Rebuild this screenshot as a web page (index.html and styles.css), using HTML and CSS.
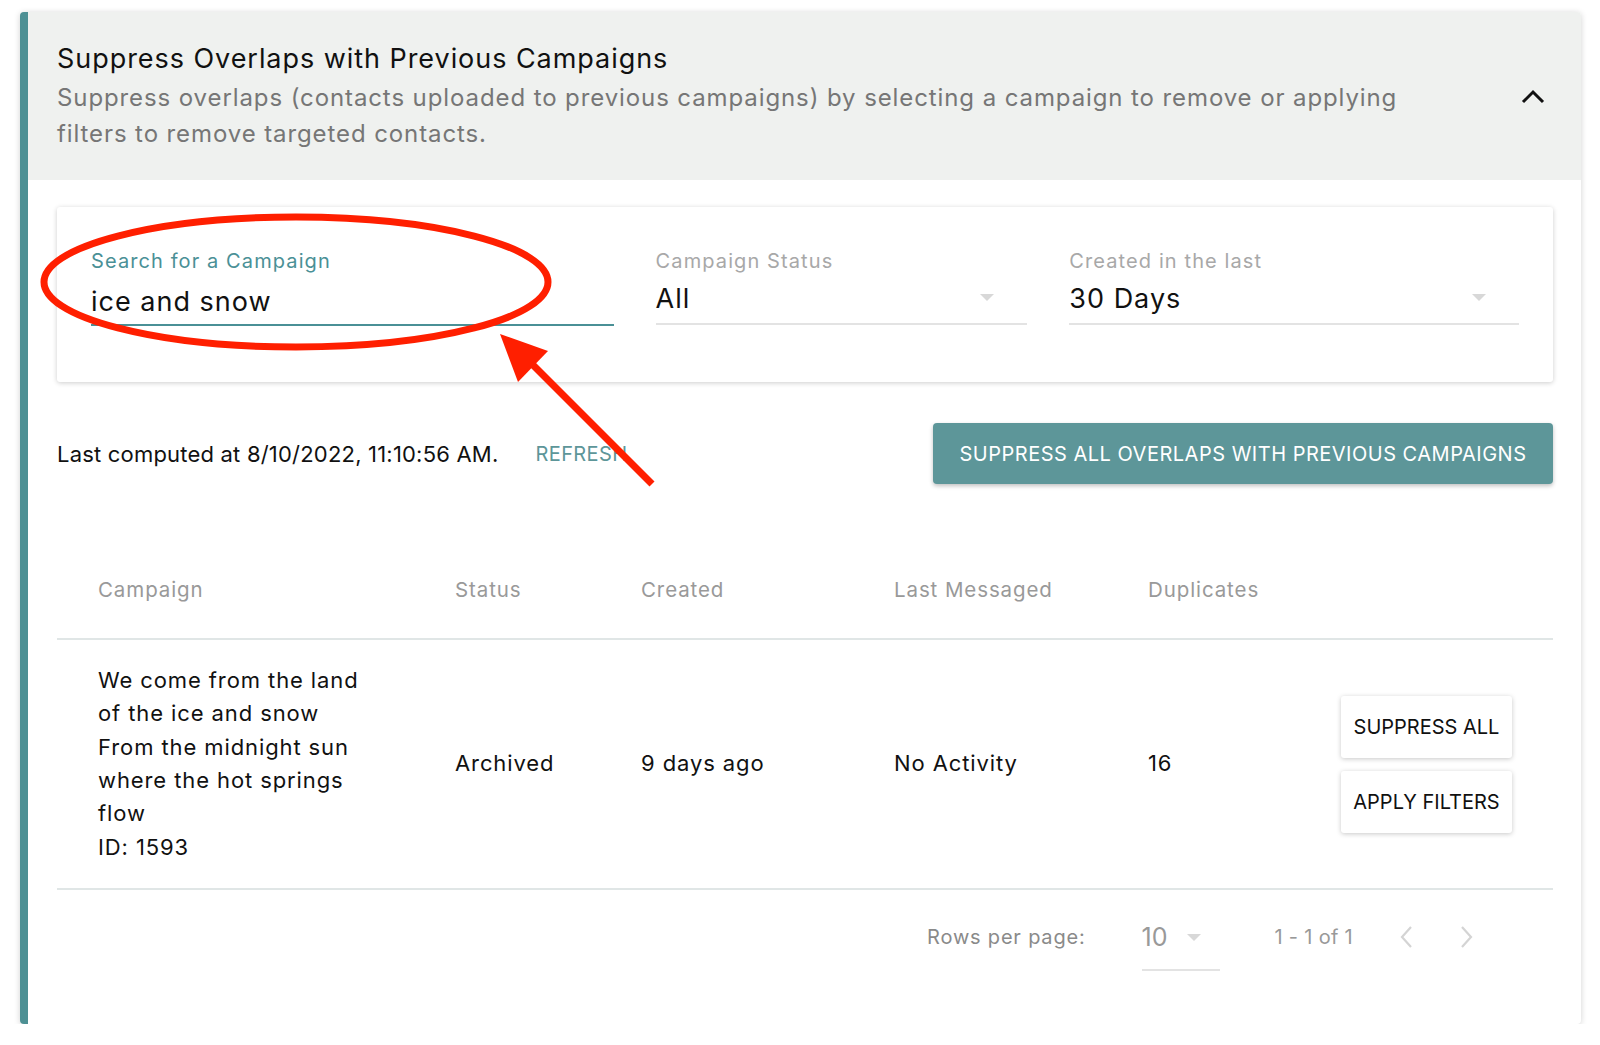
FILE: index.html
```html
<!DOCTYPE html>
<html lang="en">
<head>
    <meta charset="UTF-8">
    <meta name="viewport" content="width=device-width, initial-scale=1.0">
    <title>Suppress Overlaps</title>
    <link rel="stylesheet" href="styles.css">
</head>
<body>
    <div class="panel">
        <div class="panel-head">
            <div class="head-text">
                <h2>Suppress Overlaps with Previous Campaigns</h2>
                <p>Suppress overlaps (contacts uploaded to previous campaigns) by selecting a campaign to remove or applying filters to remove targeted contacts.</p>
            </div>
            <svg class="chevron" width="24" height="24" viewBox="0 0 24 24"><path d="M2 17 12 7l10 10" fill="none" stroke="#111" stroke-width="3"/></svg>
        </div>

        <div class="panel-body">
            <div class="filters">
                <div class="field field-search">
                    <label>Search for a Campaign</label>
                    <div class="value">ice and snow</div>
                </div>
                <div class="field field-status">
                    <label>Campaign Status</label>
                    <div class="value">All<span class="caret"></span></div>
                </div>
                <div class="field field-created">
                    <label>Created in the last</label>
                    <div class="value">30 Days<span class="caret"></span></div>
                </div>
            </div>

            <div class="toolbar">
                <span class="computed">Last computed at 8/10/2022, 11:10:56 AM.</span>
                <span class="refresh">Refresh</span>
                <button class="btn-primary">Suppress all overlaps with previous campaigns</button>
            </div>

            <div class="grid head-row">
                <div class="col-campaign">Campaign</div>
                <div>Status</div>
                <div>Created</div>
                <div>Last Messaged</div>
                <div>Duplicates</div>
                <div></div>
            </div>
            <div class="grid body-row">
                <div class="col-campaign">We come from the land<br>of the ice and snow<br>From the midnight sun<br>where the hot springs<br>flow<br>ID: 1593</div>
                <div>Archived</div>
                <div>9 days ago</div>
                <div>No Activity</div>
                <div>16</div>
                <div class="actions">
                    <button class="btn-plain">Suppress all</button>
                    <button class="btn-plain">Apply filters</button>
                </div>
            </div>

            <div class="pager">
                <span class="rows-label">Rows per page:</span>
                <div class="rows-select">10<span class="caret"></span></div>
                <span class="range">1 - 1 of 1</span>
                <svg class="page-arrow" width="16" height="24" viewBox="0 0 16 24"><path d="M13 2 4 12l9 10" fill="none" stroke="#d4d4d4" stroke-width="2.2"/></svg>
                <svg class="page-arrow" width="16" height="24" viewBox="0 0 16 24"><path d="M3 2l9 10-9 10" fill="none" stroke="#d4d4d4" stroke-width="2.2"/></svg>
            </div>
        </div>
    </div>

    <!-- red annotation drawn over the screenshot -->
    <svg class="markup" width="1600" height="1045" viewBox="0 0 1600 1045">
        <ellipse cx="296" cy="282" rx="252" ry="65" fill="none" stroke="#ff1f00" stroke-width="7"/>
        <line x1="652" y1="484" x2="530" y2="362" stroke="#ff1f00" stroke-width="7"/>
        <polygon points="500,334 548,351 518,382" fill="#ff1f00"/>
    </svg>
</body>
</html>
```

FILE: styles.css
```css
body {
    margin: 0;
    font-family: Inter, "Open Sans", sans-serif;
    background: #fff;
    color: #111;
}
.panel {
    margin: 12px 19px 0 20px;
    border-left: 8px solid #4d9094;
    border-radius: 4px;
    background: #fff;
    box-shadow: 0 1px 6px rgba(0, 0, 0, 0.18);
}
.panel-head {
    background: #eff1ef;
    display: flex;
    align-items: center;
    padding: 29px 36px 28px 29px;
    border-top-right-radius: 4px;
}
.head-text {
    flex: 1;
}
.panel-head h2 {
    margin: 0;
    font-size: 27px;
    font-weight: 400;
    line-height: 36px;
    letter-spacing: 0.95px;
}
.panel-head p {
    margin: 3px 0 0;
    max-width: 1370px;
    font-size: 24px;
    line-height: 36px;
    letter-spacing: 0.9px;
    color: #767676;
}
.chevron {
    width: 24px;
    height: 24px;
}
.panel-body {
    padding: 27px 28px 0 29px;
}
.filters {
    display: flex;
    gap: 42px;
    height: 175px;
    box-sizing: border-box;
    padding: 41px 34px 0;
    background: #fff;
    border-radius: 3px;
    box-shadow: 0 1px 5px rgba(0, 0, 0, 0.2);
}
.field label {
    display: block;
    font-size: 20px;
    line-height: 26px;
    letter-spacing: 1.1px;
    color: #a8a8a8;
}
.field .value {
    position: relative;
    font-size: 27px;
    line-height: 36px;
    letter-spacing: 1px;
    padding: 7px 0 6px;
    border-bottom: 2px solid #e3e3e3;
}
.field-search { width: 523px; }
.field-search label { color: #4a9096; }
.field-search .value {
    padding-top: 10px;
    padding-bottom: 4px;
    border-bottom-color: #4a9096;
}
.field-status { width: 372px; }
.field-created { width: 450px; }
.caret {
    position: absolute;
    right: 33px;
    top: 20px;
    border-left: 7px solid transparent;
    border-right: 7px solid transparent;
    border-top: 7px solid #d8d8d8;
}
.toolbar {
    display: flex;
    align-items: center;
    margin-top: 41px;
}
.computed {
    font-size: 22px;
    letter-spacing: 0.2px;
}
.refresh {
    margin-left: 37px;
    font-size: 20px;
    letter-spacing: 0.4px;
    color: #5d9699;
    text-transform: uppercase;
}
.btn-primary {
    margin-left: auto;
    width: 620px;
    height: 61px;
    border: none;
    border-radius: 4px;
    background: #5d9699;
    color: #fff;
    font-family: inherit;
    font-size: 20px;
    letter-spacing: 0.5px;
    text-transform: uppercase;
    box-shadow: 0 2px 4px rgba(0, 0, 0, 0.25);
}
.grid {
    display: grid;
    grid-template-columns: 398px 186px 253px 254px 193px 1fr;
    align-items: center;
}
.col-campaign {
    padding-left: 41px;
}
.head-row {
    margin-top: 56px;
    height: 100px;
    border-bottom: 2px solid #e0e6e6;
    color: #999;
    font-size: 20.5px;
    letter-spacing: 0.9px;
    box-sizing: border-box;
}
.body-row {
    height: 250px;
    border-bottom: 2px solid #e0e6e6;
    font-size: 22px;
    line-height: 33.4px;
    letter-spacing: 0.9px;
    box-sizing: border-box;
}
.actions {
    display: flex;
    flex-direction: column;
    gap: 13px;
}
.btn-plain {
    width: 171px;
    height: 62px;
    border: none;
    border-radius: 3px;
    background: #fff;
    font-family: inherit;
    font-size: 20px;
    color: #111;
    text-transform: uppercase;
    box-shadow: 0 1px 5px rgba(0, 0, 0, 0.22);
}
.pager {
    display: flex;
    align-items: flex-start;
    justify-content: flex-end;
    height: 134px;
    box-sizing: border-box;
    padding: 30px 78px 0 0;
    color: #8a8a8a;
    line-height: 34px;
}
.rows-label {
    font-size: 20px;
    letter-spacing: 0.8px;
}
.rows-select {
    position: relative;
    width: 78px;
    margin-left: 56px;
    padding-bottom: 15px;
    font-size: 25px;
    color: #999;
    border-bottom: 2px solid #e3e3e3;
}
.rows-select .caret {
    right: 19px;
    top: 14px;
}
.range {
    margin-left: 55px;
    font-size: 20px;
    letter-spacing: 0.3px;
    color: #999;
}
.page-arrow {
    margin: 5px 0 0 45px;
}
.page-arrow + .page-arrow {
    margin-left: 45px;
}
.markup {
    position: absolute;
    left: 0;
    top: 0;
    pointer-events: none;
}
```
